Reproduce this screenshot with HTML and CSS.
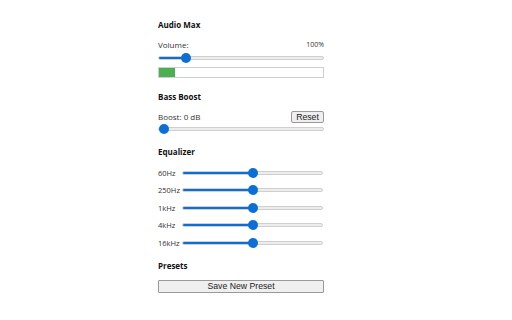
FILE: index.html
```html
<!DOCTYPE html>
<html>
<head>
<meta charset="utf-8">
<link rel="stylesheet" href="styles.css">
</head>
<body>
<div class="panel">
  <h2 class="title first">Audio Max</h2>
  <div class="row label-row"><span>Volume:</span><span class="value">100%</span></div>
  <input class="slider" type="range" min="0" max="700" value="100" style="--p:14%">
  <div class="meter"><div class="meter-fill" style="width:10%"></div></div>

  <h2 class="title">Bass Boost</h2>
  <div class="row boost-row"><span>Boost: 0 dB</span><button class="btn small">Reset</button></div>
  <input class="slider" type="range" min="0" max="20" value="0" style="--p:0%">

  <h2 class="title">Equalizer</h2>
  <div class="eq">
    <div class="eq-row"><span class="eq-label">60Hz</span><input class="slider" type="range" value="50" style="--p:50%"></div>
    <div class="eq-row"><span class="eq-label">250Hz</span><input class="slider" type="range" value="50" style="--p:50%"></div>
    <div class="eq-row"><span class="eq-label">1kHz</span><input class="slider" type="range" value="50" style="--p:50%"></div>
    <div class="eq-row"><span class="eq-label">4kHz</span><input class="slider" type="range" value="50" style="--p:50%"></div>
    <div class="eq-row"><span class="eq-label">16kHz</span><input class="slider" type="range" value="50" style="--p:50%"></div>
  </div>

  <h2 class="title">Presets</h2>
  <button class="btn wide">Save New Preset</button>
</div>
</body>
</html>
```
FILE: styles.css
```css
html, body {
  margin: 0;
  padding: 0;
  background: #fff;
}
body {
  font-family: "Open Sans", "Noto Sans", sans-serif;
  font-size: 8px;
  color: #333;
}
.panel {
  margin-left: 158px;
  width: 166px;
  padding-top: 20px;
  display: flex;
  flex-direction: column;
}
.title {
  margin: 13.5px 0 0 0;
  font-size: 8px;
  line-height: 10px;
  height: 10px;
  font-weight: 700;
  color: #111;
}
.title.first { margin-top: 0; }
.row {
  display: flex;
  justify-content: space-between;
  align-items: center;
}
.label-row {
  margin-top: 10px;
  height: 10px;
  line-height: 10px;
}
.value { font-size: 7px; }
.slider {
  -webkit-appearance: none;
  appearance: none;
  margin: 0;
  padding: 0;
  width: 100%;
  height: 10px;
  background: transparent;
  display: block;
}
.slider::-webkit-slider-runnable-track {
  height: 4px;
  border-radius: 3px;
  border: 1px solid #cfcfcf;
  background: linear-gradient(to right, #0b6fd6 var(--p), #ececec var(--p));
  box-sizing: border-box;
}
.slider::-webkit-slider-thumb {
  -webkit-appearance: none;
  width: 10px;
  height: 10px;
  border-radius: 50%;
  background: #0b6fd6;
  border: none;
  margin-top: -4px;
}
.label-row + .slider { margin-top: 3px; }
.meter {
  margin-top: 4px;
  height: 11px;
  border: 1px solid #cfcfcf;
  box-sizing: border-box;
  background: #fff;
}
.meter-fill {
  height: 100%;
  background: #4caf50;
}
.boost-row {
  margin-top: 9px;
  height: 12px;
}
.boost-row + .slider { margin-top: 1px; }
.btn {
  font-family: "Liberation Sans", Arial, sans-serif;
  font-size: 8.7px;
  color: #222;
  background: #efefef;
  border: 1px solid #999;
  border-radius: 2px;
  padding: 0;
  box-sizing: border-box;
}
.btn.small {
  width: 33px;
  height: 12px;
  line-height: 10px;
}
.btn.wide {
  margin-top: 9px;
  width: 166px;
  height: 13px;
  line-height: 11px;
  border-radius: 1px;
}
.eq {
  margin-top: 10.5px;
  display: flex;
  flex-direction: column;
  gap: 7.5px;
}
.eq-row {
  display: flex;
  align-items: center;
  height: 10px;
}
.eq-label {
  width: 24px;
  flex: none;
  font-size: 7.5px;
}
.eq-row .slider {
  width: 141px;
  flex: none;
}
```
